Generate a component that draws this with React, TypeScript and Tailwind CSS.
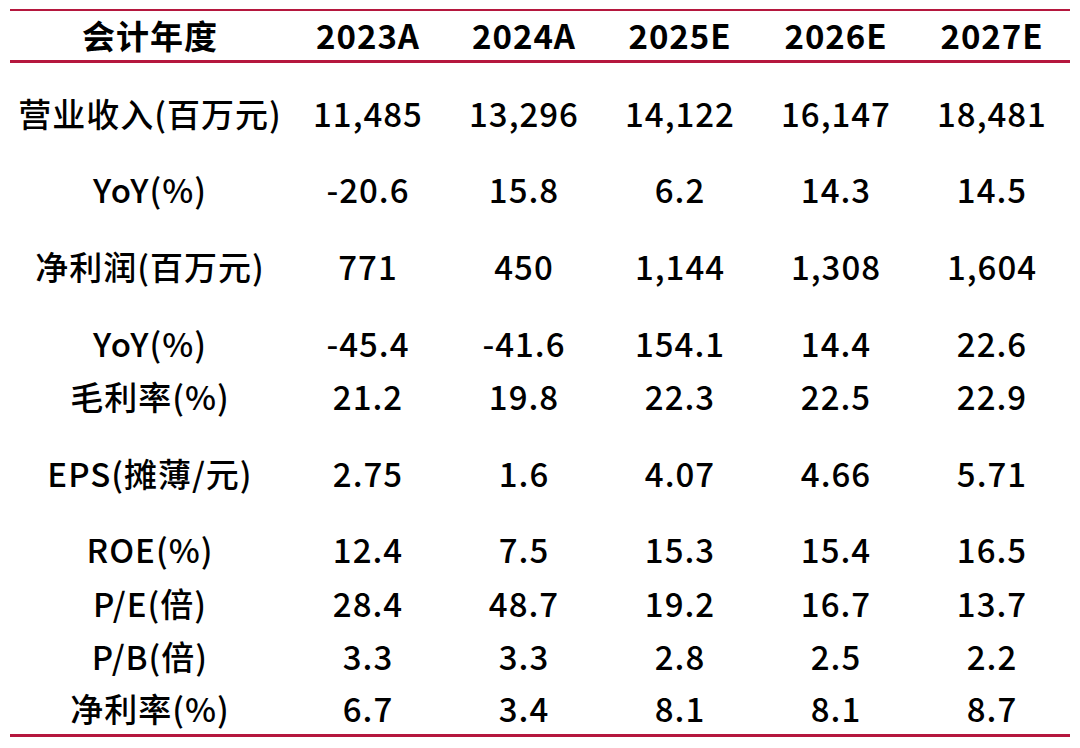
import React from "react";

const RED = "bg-[#b5173e]";

type Row = { label: string; vals: string[]; mt: string; h: string };

const rows: Row[] = [
  { label: "营业收入(百万元)", vals: ["11,485", "13,296", "14,122", "16,147", "18,481"], mt: "mt-[24px]", h: "h-[53px]" },
  { label: "YoY(%)", vals: ["-20.6", "15.8", "6.2", "14.3", "14.5"], mt: "mt-[23px]", h: "h-[53px]" },
  { label: "净利润(百万元)", vals: ["771", "450", "1,144", "1,308", "1,604"], mt: "mt-[24px]", h: "h-[53px]" },
  { label: "YoY(%)", vals: ["-45.4", "-41.6", "154.1", "14.4", "22.6"], mt: "mt-[24px]", h: "h-[53px]" },
  { label: "毛利率(%)", vals: ["21.2", "19.8", "22.3", "22.5", "22.9"], mt: "mt-0", h: "h-[53px]" },
  { label: "EPS(摊薄/元)", vals: ["2.75", "1.6", "4.07", "4.66", "5.71"], mt: "mt-[24px]", h: "h-[53px]" },
  { label: "ROE(%)", vals: ["12.4", "7.5", "15.3", "15.4", "16.5"], mt: "mt-[23px]", h: "h-[53px]" },
  { label: "P/E(倍)", vals: ["28.4", "48.7", "19.2", "16.7", "13.7"], mt: "mt-[1px]", h: "h-[53px]" },
  { label: "P/B(倍)", vals: ["3.3", "3.3", "2.8", "2.5", "2.2"], mt: "mt-0", h: "h-[52px]" },
  { label: "净利率(%)", vals: ["6.7", "3.4", "8.1", "8.1", "8.7"], mt: "mt-0", h: "h-[52px]" },
];

const headers = ["2023A", "2024A", "2025E", "2026E", "2027E"];

export default function App() {
  return (
    <div
      className="w-[1080px] h-[748px] bg-white px-[10px] pt-[9px] text-black"
      style={{ fontFamily: '"Noto Sans CJK SC", "Noto Sans", sans-serif' }}
    >
      <div className={`h-[2px] ${RED}`} />
      <div className="grid grid-cols-[280px_repeat(5,1fr)] items-center h-[49px] text-[33px] tracking-[1px] font-bold leading-none">
        <div className="text-center">会计年度</div>
        {headers.map((h) => (
          <div key={h} className="text-center">
            {h}
          </div>
        ))}
      </div>
      <div className={`h-[3px] ${RED}`} />
      {rows.map((r, i) => (
        <div
          key={i}
          className={`grid grid-cols-[280px_repeat(5,1fr)] items-center text-[33px] tracking-[1px] font-medium leading-none ${r.mt} ${r.h}`}
        >
          <div className="text-center">{r.label}</div>
          {r.vals.map((v, j) => (
            <div key={j} className="text-center">
              {v}
            </div>
          ))}
        </div>
      ))}
      <div className={`h-[3px] ${RED}`} />
    </div>
  );
}
